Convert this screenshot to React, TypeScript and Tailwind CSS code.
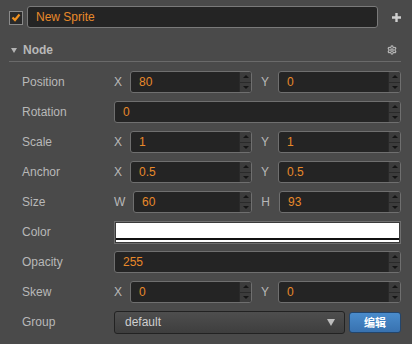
import { Settings } from "lucide-react"

const font = { fontFamily: '"Liberation Sans", Arial, sans-serif' }

function Spinner() {
  return (
    <div className="flex flex-col w-[12px] h-full bg-[#3c3c3c] border-l border-[#2a2a2a]">
      <div className="flex-1 flex items-center justify-center border-b border-[#2a2a2a]">
        <span className="w-0 h-0 border-l-[3px] border-r-[3px] border-b-[3px] border-l-transparent border-r-transparent border-b-[#151515]" />
      </div>
      <div className="flex-1 flex items-center justify-center">
        <span className="w-0 h-0 border-l-[3px] border-r-[3px] border-t-[3px] border-l-transparent border-r-transparent border-t-[#151515]" />
      </div>
    </div>
  )
}

function NumInput({ value, className = "" }: { value: string; className?: string }) {
  return (
    <div
      className={`flex h-[22px] items-stretch rounded-[3px] border border-[#6f6f6f] bg-[#242424] overflow-hidden ${className}`}
    >
      <span className="flex-1 flex items-center pl-[8px] text-[12px] text-[#e8892a]">{value}</span>
      <Spinner />
    </div>
  )
}

function Row({ label, children }: { label: string; children: React.ReactNode }) {
  return (
    <div className="flex items-center h-[22px]">
      <span className="w-[92px] text-[12px] text-[#b8b8b8]">{label}</span>
      <div className="flex-1 flex items-center">{children}</div>
    </div>
  )
}

function Vec({
  a,
  b,
  va,
  vb,
  wide,
}: {
  a: string
  b: string
  va: string
  vb: string
  wide?: boolean
}) {
  return (
    <>
      <span className={`${wide ? "w-[19px]" : "w-[16px]"} text-[12px] text-[#b8b8b8]`}>{a}</span>
      <NumInput value={va} className={wide ? "w-[119px]" : "w-[122px]"} />
      <span className={`${wide ? "w-[27px]" : "w-[26px]"} text-center text-[12px] text-[#b8b8b8]`}>{b}</span>
      <NumInput value={vb} className="flex-1" />
    </>
  )
}

export default function App() {
  return (
    <div style={font} className="w-[412px] h-[344px] bg-[#4a4a4a] overflow-hidden">
      {/* top bar */}
      <div className="flex items-center pt-[4px] pl-[9px] pr-[10px] h-[26px] box-content">
        <div className="w-[14px] h-[14px] mt-[1px] border border-[#8a8a8a] bg-[#2a2a2a] flex items-center justify-center">
          <svg width="10" height="9" viewBox="0 0 10 9">
            <path d="M1.5 4.5 L4 7 L8.5 1.5" fill="none" stroke="#f0911e" strokeWidth="2.2" />
          </svg>
        </div>
        <div className="ml-[4px] w-[351px] h-[22px] rounded-[3px] border border-[#7a7a7a] bg-[#242424] flex items-center pl-[8px] text-[12px] text-[#e8892a]">
          New Sprite
        </div>
        <div className="flex-1 flex justify-end">
          <svg width="11" height="11" viewBox="0 0 11 11">
            <path d="M5.5 1 V10 M1 5.5 H10" stroke="#cfcfcf" strokeWidth="2.4" />
          </svg>
        </div>
      </div>

      {/* node header */}
      <div className="mt-[13px] mx-[9px] flex items-center h-[14px]">
        <span className="w-0 h-0 ml-[2px] border-l-[3px] border-r-[3px] border-t-[5px] border-l-transparent border-r-transparent border-t-[#b4b4b4]" />
        <span className="ml-[6px] text-[12px] font-bold text-[#b8b8b8]">Node</span>
        <Settings size={10} strokeWidth={3} className="ml-auto mr-[6px] text-[#b4b4b4]" />
      </div>
      <div className="mx-[9px] mr-[11px] mt-[4px] h-px bg-[#6a6a6a]" />

      {/* rows */}
      <div className="pl-[22px] pr-[11px] pt-[9px] flex flex-col gap-[8px]">
        <Row label="Position">
          <Vec a="X" b="Y" va="80" vb="0" />
        </Row>
        <Row label="Rotation">
          <NumInput value="0" className="flex-1" />
        </Row>
        <Row label="Scale">
          <Vec a="X" b="Y" va="1" vb="1" />
        </Row>
        <Row label="Anchor">
          <Vec a="X" b="Y" va="0.5" vb="0.5" />
        </Row>
        <Row label="Size">
          <Vec a="W" b="H" va="60" vb="93" wide />
        </Row>
        <Row label="Color">
          <div className="flex-1 h-[23px] border border-[#6f6f6f] bg-[#3a3a3a] p-px">
            <div className="h-full bg-white flex flex-col justify-end">
              <div className="h-[2px] bg-[#111] mb-[2px]" />
            </div>
          </div>
        </Row>
        <Row label="Opacity">
          <NumInput value="255" className="flex-1" />
        </Row>
        <Row label="Skew">
          <Vec a="X" b="Y" va="0" vb="0" />
        </Row>
        <Row label="Group">
          <div className="w-[231px] h-[23px] rounded-[3px] border border-[#222] bg-gradient-to-b from-[#4e4e4e] to-[#3e3e3e] flex items-center pl-[10px] pr-[9px] text-[12px] text-[#cfcfcf]">
            <span>default</span>
            <span className="ml-auto w-0 h-0 border-l-[4px] border-r-[4px] border-t-[7px] border-l-transparent border-r-transparent border-t-[#bdbdbd]" />
          </div>
          <button
            className="ml-[4px] flex-1 h-[21px] rounded-[3px] border border-[#23456b] bg-gradient-to-b from-[#4a8ccc] to-[#3872b0] text-white text-[11px] font-bold flex items-center justify-center"
            style={{ fontFamily: '"Noto Sans CJK SC", sans-serif' }}
          >
            编辑
          </button>
        </Row>
      </div>
    </div>
  )
}
